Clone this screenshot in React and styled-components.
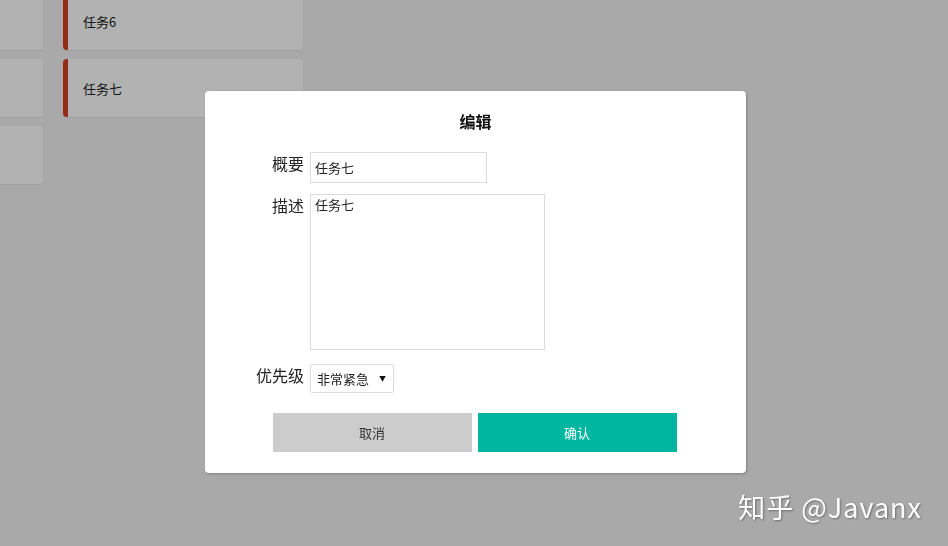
import styled, { createGlobalStyle } from "styled-components";

const GlobalStyle = createGlobalStyle`
  html, body {
    margin: 0;
    padding: 0;
    height: 100%;
    overflow: hidden;
  }
  body {
    background: #f2f2f2;
    font-family: "Liberation Sans", "Noto Sans CJK SC", sans-serif;
    color: #222;
  }
`;

const Board = styled.div`
  display: flex;
  gap: 20px;
  margin-left: -197px;
  margin-top: -8px;
`;

const Column = styled.div`
  display: flex;
  flex-direction: column;
  gap: 9px;
  width: 240px;
`;

const Card = styled.div`
  height: 58px;
  display: flex;
  align-items: center;
  padding-left: 15px;
  box-sizing: border-box;
  background: #fff;
  border-radius: 4px;
  border-left: ${(p) => (p.$flag ? "5px solid #d63f22" : "none")};
  box-shadow: 0 1px 2px rgba(0, 0, 0, 0.06);
  font-size: 13px;
  font-family: "Noto Sans CJK SC", sans-serif;
  color: #222;
`;

const Overlay = styled.div`
  position: fixed;
  inset: 0;
  background: rgba(0, 0, 0, 0.3);
`;

const Modal = styled.div`
  position: fixed;
  top: 91px;
  left: 205px;
  width: 541px;
  height: 382px;
  box-sizing: border-box;
  background: #fff;
  border-radius: 4px;
  box-shadow: 1px 1px 3px rgba(0, 0, 0, 0.25);
  padding: 19px 0 0;
  display: flex;
  flex-direction: column;
  font-family: "Noto Sans CJK SC", sans-serif;
`;

const Title = styled.h3`
  margin: 0 0 20px;
  text-align: center;
  font-size: 16px;
  font-weight: bold;
  line-height: 22px;
  color: #111;
`;

const Form = styled.div`
  display: grid;
  grid-template-columns: 99px auto;
  column-gap: 6px;
  align-items: start;
`;

const Label = styled.label`
  text-align: right;
  font-size: 16px;
  line-height: 20px;
  padding-top: 1px;
  color: #222;
  margin-bottom: ${(p) => p.$gap || 0}px;
`;

const Field = styled.div`
  margin-bottom: ${(p) => p.$gap || 0}px;
  position: relative;
  justify-self: start;
`;

const TextInput = styled.input`
  display: block;
  width: 177px;
  height: 31px;
  box-sizing: border-box;
  border: 1px solid #dcdcdc;
  padding: 0 4px;
  font-size: 13px;
  font-family: "Noto Sans CJK SC", sans-serif;
  color: #222;
  outline: none;
`;

const TextArea = styled.textarea`
  display: block;
  width: 235px;
  height: 156px;
  box-sizing: border-box;
  border: 1px solid #dcdcdc;
  padding: 1px 4px;
  font-size: 13px;
  line-height: 18px;
  font-family: "Noto Sans CJK SC", sans-serif;
  color: #222;
  resize: none;
  outline: none;
`;

const Select = styled.select`
  display: block;
  width: 84px;
  height: 29px;
  box-sizing: border-box;
  border: 1px solid #dcdcdc;
  border-radius: 2px;
  background: #fff;
  appearance: none;
  padding: 0 0 0 6px;
  font-size: 13px;
  font-family: "Noto Sans CJK SC", sans-serif;
  color: #222;
  outline: none;
`;

const Arrow = styled.span`
  position: absolute;
  right: 8px;
  top: 9px;
  font-size: 7px;
  line-height: 10px;
  color: #111;
  pointer-events: none;
`;

const Actions = styled.div`
  display: flex;
  justify-content: center;
  gap: 6px;
  margin-top: 20px;
  padding-right: 2px;
`;

const Button = styled.button`
  width: 199px;
  height: 39px;
  border: none;
  font-size: 13px;
  font-family: "Noto Sans CJK SC", sans-serif;
  background: ${(p) => (p.$primary ? "#00b6a1" : "#cccccc")};
  color: ${(p) => (p.$primary ? "#fff" : "#333")};
  cursor: pointer;
`;

const Watermark = styled.div`
  position: fixed;
  right: 26px;
  bottom: 24px;
  font-size: 27px;
  line-height: 30px;
  color: #fff;
  font-family: "Noto Sans CJK SC", sans-serif;
  text-shadow: 1px 1px 2px rgba(0, 0, 0, 0.35);
  letter-spacing: 1px;
`;

export default function App() {
  return (
    <>
      <GlobalStyle />
      <Board>
        <Column>
          <Card />
          <Card />
          <Card />
        </Column>
        <Column>
          <Card $flag>任务6</Card>
          <Card $flag>任务七</Card>
        </Column>
      </Board>
      <Overlay />
      <Modal>
        <Title>编辑</Title>
        <Form>
          <Label $gap={11}>概要</Label>
          <Field $gap={11}>
            <TextInput defaultValue="任务七" />
          </Field>
          <Label $gap={14}>描述</Label>
          <Field $gap={14}>
            <TextArea defaultValue="任务七" />
          </Field>
          <Label>优先级</Label>
          <Field>
            <Select defaultValue="4">
              <option value="1">一般</option>
              <option value="2">紧急</option>
              <option value="4">非常紧急</option>
            </Select>
            <Arrow>▼</Arrow>
          </Field>
        </Form>
        <Actions>
          <Button>取消</Button>
          <Button $primary>确认</Button>
        </Actions>
      </Modal>
      <Watermark>知乎 @Javanx</Watermark>
    </>
  );
}
